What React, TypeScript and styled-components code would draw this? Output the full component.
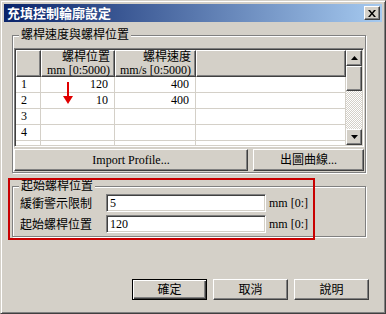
import React from "react";
import styled, { createGlobalStyle, css } from "styled-components";

const GlobalStyle = createGlobalStyle`
  html, body {
    margin: 0;
    padding: 0;
    background: #d4d0c8;
  }
  body {
    font-family: "Liberation Serif", "Noto Sans CJK TC", serif;
    font-size: 12px;
    color: #000;
  }
  * {
    box-sizing: border-box;
  }
`;

const raised = css`
  border: 1px solid;
  border-color: #fff #404040 #404040 #fff;
  box-shadow: inset -1px -1px 0 #808080, inset 1px 1px 0 #d4d0c8;
  background: #d4d0c8;
`;

const Window = styled.div`
  position: relative;
  width: 386px;
  height: 314px;
  background: #d4d0c8;
  border: 1px solid;
  border-color: #d4d0c8 #404040 #404040 #d4d0c8;
  box-shadow: inset 1px 1px 0 #fff, inset -1px -1px 0 #808080;
  padding: 3px;
  display: flex;
  flex-direction: column;
`;

const TitleBar = styled.div`
  height: 18px;
  display: flex;
  align-items: center;
  padding: 0 2px 0 3px;
  background: linear-gradient(to right, #0a246a, #a6caf0);
`;

const Title = styled.span`
  font-family: "Noto Sans CJK TC", sans-serif;
  font-weight: 700;
  font-size: 13px;
  line-height: 16px;
  color: #fff;
`;

const CloseButton = styled.button`
  ${raised};
  margin-left: auto;
  width: 16px;
  height: 14px;
  padding: 0;
  display: flex;
  align-items: center;
  justify-content: center;
`;

const Body = styled.div`
  flex: 1;
  display: flex;
  flex-direction: column;
  padding: 0 0 0 8px;
`;

const Group = styled.fieldset<{ $top: number }>`
  margin: ${(p) => p.$top}px 0 0 0;
  width: 354px;
  min-width: 0;
  padding: 0 1px 1px;
  border: 1px solid #808080;
  box-shadow: inset 1px 1px 0 #fff, 1px 1px 0 #fff;
`;

const Legend = styled.legend`
  margin-left: 5px;
  padding: 0 2px;
  font-size: 12px;
  line-height: 14px;
  background: #d4d0c8;
`;

const GridBox = styled.div`
  margin-top: 6px;
  width: 350px;
  height: 99px;
  display: flex;
  border: 1px solid;
  border-color: #808080 #fff #fff #808080;
  box-shadow: inset 1px 1px 0 #404040, inset -1px -1px 0 #d4d0c8;
  padding: 1px;
  background: #fff;
`;

const Grid = styled.div`
  width: 330px;
  height: 95px;
  overflow: hidden;
  display: grid;
  grid-template-columns: 25px 74px 81px 150px;
  grid-auto-rows: 16px;
  grid-template-rows: 27px;
  background: #fff;
`;

const HeadCell = styled.div`
  ${raised};
  padding: 0 4px 0 0;
  font-size: 12px;
  line-height: 12.5px;
  display: flex;
  flex-direction: column;
  justify-content: center;
  align-items: flex-end;
  white-space: nowrap;
`;

const Cell = styled.div<{ $align?: "left" | "right" }>`
  border-right: 1px solid #d4d0c8;
  border-bottom: 1px solid #d4d0c8;
  padding: 0 6px 0 5px;
  text-align: ${(p) => p.$align ?? "right"};
  line-height: 15px;
  white-space: nowrap;
`;

const ScrollBar = styled.div`
  width: 16px;
  height: 95px;
  display: flex;
  flex-direction: column;
  background-color: #fff;
  background-image: repeating-conic-gradient(#d4d0c8 0 25%, #fff 0 50%);
  background-size: 2px 2px;
`;

const ScrollButton = styled.div<{ $h: number }>`
  ${raised};
  height: ${(p) => p.$h}px;
  display: flex;
  align-items: center;
  justify-content: center;
`;

const Spacer = styled.div`
  flex: 1;
`;

const ButtonRow = styled.div`
  display: flex;
  gap: 5px;
  margin-top: 2px;
`;

const Button = styled.button<{ $w: number; $h?: number; $default?: boolean }>`
  ${raised};
  width: ${(p) => p.$w}px;
  height: ${(p) => p.$h ?? 22}px;
  padding: 0;
  font-family: "Liberation Serif", "Noto Sans CJK TC", serif;
  font-size: 12px;
  line-height: 14px;
  color: #000;
  ${(p) =>
    p.$default &&
    css`
      border: 1px solid #000;
      box-shadow: inset 1px 1px 0 #fff, inset -1px -1px 0 #404040,
        inset -2px -2px 0 #808080;
    `}
`;

const FieldRow = styled.div`
  display: flex;
  align-items: center;
  padding-left: 6px;
  height: 18px;
  & + & {
    margin-top: 3px;
  }
`;

const FieldLabel = styled.span`
  width: 86px;
  font-size: 12px;
`;

const TextBox = styled.div`
  width: 160px;
  height: 18px;
  border: 1px solid;
  border-color: #808080 #fff #fff #808080;
  box-shadow: inset 1px 1px 0 #404040, inset -1px -1px 0 #d4d0c8;
  background: #fff;
  padding: 0 3px;
  line-height: 16px;
`;

const Unit = styled.span`
  margin-left: 3px;
  font-size: 12px;
`;

const Fields = styled.div`
  padding-top: 1px;
  padding-bottom: 2px;
`;

const DialogButtons = styled.div`
  margin-top: auto;
  margin-bottom: 10px;
  margin-right: 13px;
  display: flex;
  justify-content: flex-end;
  gap: 6px;
`;

const Highlight = styled.div`
  position: absolute;
  left: 7px;
  top: 177px;
  width: 307px;
  height: 62px;
  border: 2px solid #c80000;
  pointer-events: none;
`;

const ArrowMark = styled.svg`
  position: absolute;
  left: 61px;
  top: 80px;
`;

const rows = [
  { n: "1", pos: "120", speed: "400" },
  { n: "2", pos: "10", speed: "400" },
  { n: "3", pos: "", speed: "" },
  { n: "4", pos: "", speed: "" },
  { n: "", pos: "", speed: "" },
];

export default function App() {
  return (
    <Window>
      <GlobalStyle />
      <TitleBar>
        <Title>充填控制輪廓設定</Title>
        <CloseButton aria-label="close">
          <svg width="8" height="7" viewBox="0 0 8 7">
            <path d="M0 0h2l2 2.5L6 0h2L5 3.5 8 7H6L4 4.5 2 7H0l3-3.5z" fill="#000" />
          </svg>
        </CloseButton>
      </TitleBar>
      <Body>
        <Group $top={6}>
          <Legend>螺桿速度與螺桿位置</Legend>
          <GridBox>
            <Grid>
              <HeadCell />
              <HeadCell>
                <span>螺桿位置</span>
                <span>mm [0:5000)</span>
              </HeadCell>
              <HeadCell>
                <span>螺桿速度</span>
                <span>mm/s [0:5000)</span>
              </HeadCell>
              <HeadCell />
              {rows.map((r, i) => (
                <React.Fragment key={i}>
                  <Cell $align="left">{r.n}</Cell>
                  <Cell>{r.pos}</Cell>
                  <Cell>{r.speed}</Cell>
                  <Cell />
                </React.Fragment>
              ))}
            </Grid>
            <ScrollBar>
              <ScrollButton $h={16}>
                <svg width="7" height="4" viewBox="0 0 7 4">
                  <path d="M3.5 0L7 4H0z" fill="#000" />
                </svg>
              </ScrollButton>
              <ScrollButton $h={25} />
              <Spacer />
              <ScrollButton $h={16}>
                <svg width="7" height="4" viewBox="0 0 7 4">
                  <path d="M0 0h7L3.5 4z" fill="#000" />
                </svg>
              </ScrollButton>
            </ScrollBar>
          </GridBox>
          <ButtonRow>
            <Button $w={234}>Import Profile...</Button>
            <Button $w={111}>出圖曲線...</Button>
          </ButtonRow>
        </Group>
        <Group $top={6}>
          <Legend>起始螺桿位置</Legend>
          <Fields>
            <FieldRow>
              <FieldLabel>緩衝警示限制</FieldLabel>
              <TextBox>5</TextBox>
              <Unit>mm [0:]</Unit>
            </FieldRow>
            <FieldRow>
              <FieldLabel>起始螺桿位置</FieldLabel>
              <TextBox>120</TextBox>
              <Unit>mm [0:]</Unit>
            </FieldRow>
          </Fields>
        </Group>
        <DialogButtons>
          <Button $w={75} $h={21} $default>
            確定
          </Button>
          <Button $w={75} $h={21}>
            取消
          </Button>
          <Button $w={75} $h={21}>
            說明
          </Button>
        </DialogButtons>
      </Body>
      <Highlight />
      <ArrowMark width="12" height="25" viewBox="0 0 12 25">
        <path d="M5 1h2v15H5z" fill="#e00000" />
        <path d="M1 15h10l-5 8z" fill="#e00000" />
      </ArrowMark>
    </Window>
  );
}
